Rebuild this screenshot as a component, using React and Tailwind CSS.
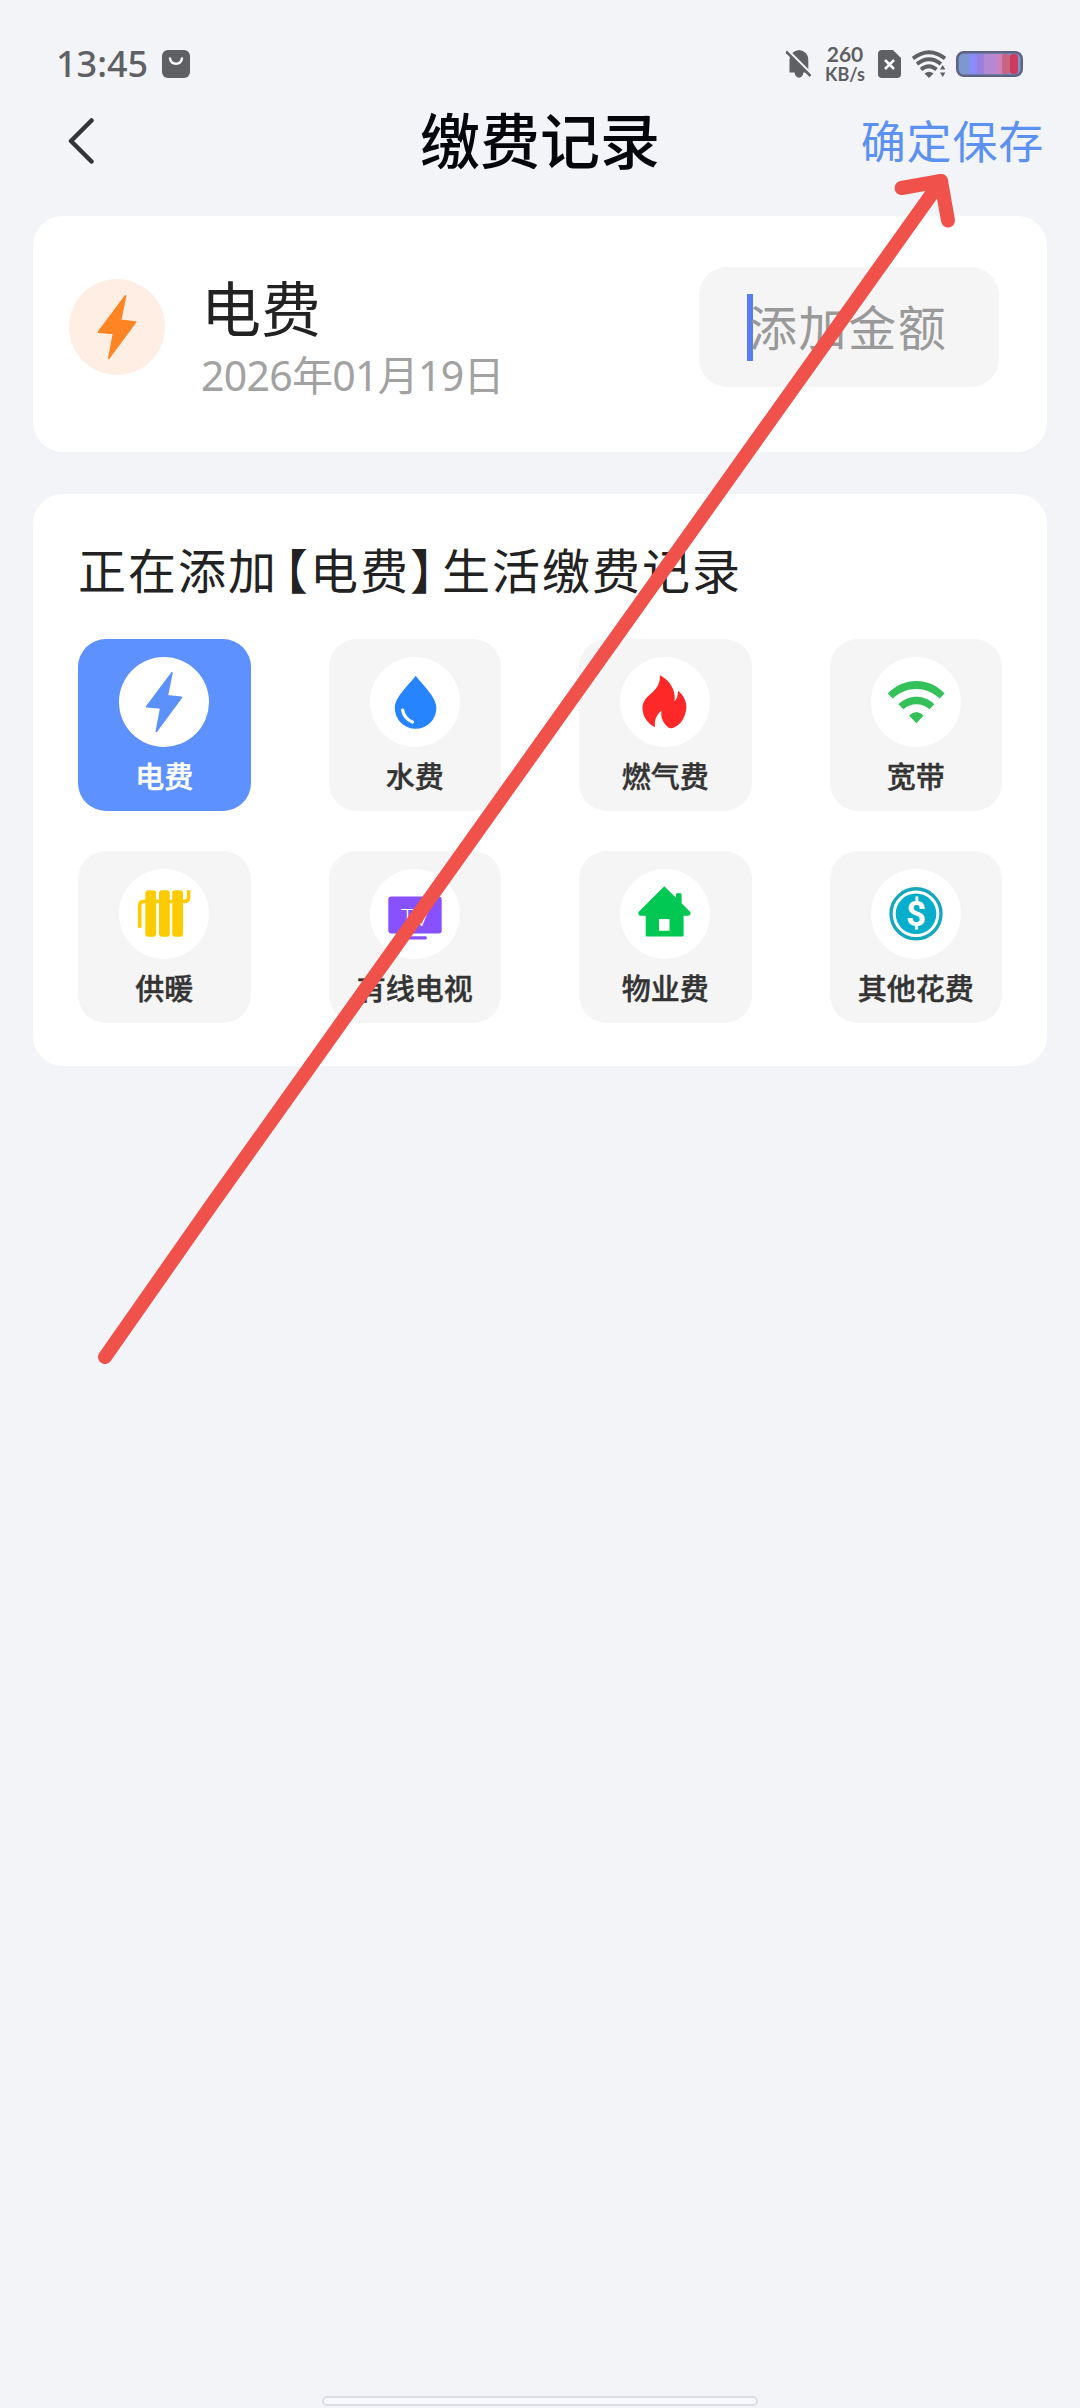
import React from 'react';

const Bolt = ({ className }) => (
  <svg viewBox="0 0 90 90" className={className} fill="currentColor" stroke="currentColor" strokeWidth="1.6" strokeLinejoin="round">
    <path d="M53 15.8 48.3 38.8 62.4 40.4 37.3 74.4 41.8 51 27.6 49.8Z" />
  </svg>
);

const Drop = () => (
  <svg viewBox="0 0 90 90" className="w-[90px] h-[90px]">
    <path d="M45.7 18.8C52.5 28 66.4 40 66.4 51a20.8 20.8 0 0 1-41.6 0C24.8 40 39 28 45.7 18.8Z" fill="#2684ff" />
    <path d="M32.6 53c1 5.5 4.5 10 9.9 12" fill="none" stroke="#fff" strokeWidth="3.2" strokeLinecap="round" />
  </svg>
);

const Flame = () => (
  <svg viewBox="0 0 90 90" className="w-[90px] h-[90px]" fill="#ff2828">
    <path d="M40 18.3C49 23 56 32 54.600 44.300C57.500 41.500 57.800 37.500 58 33.700C63.500 38 66.800 44.500 66.300 51C65.600 60.500 60.500 68.500 52 71.200Q50.300 71.500 48.600 70.800C43.300 66.500 40.300 60.500 41.500 53.500C36 58 34 64 35.200 70.300C27.500 66.500 22.700 59.500 22.500 51.500C22.500 36.500 40.500 37 40 18.300Z" />
  </svg>
);

const Wifi = () => (
  <svg viewBox="0 0 90 90" className="w-[90px] h-[90px]" fill="#34c15a">
    <path d="M16.8 36.4C33 20 58 20 73.6 36.4L68.6 41.6C55.5 28.8 35 28.8 21.8 41.6Z" />
    <path d="M27.4 47.3C37.5 37.2 53.5 37.2 63.4 47.3L58.5 52.3C51 45.7 39.8 45.7 32.4 52.3Z" />
    <path d="M38 58.5Q45.400 51.500 52.700 58.500L45.400 66.300Z" />
  </svg>
);

const Heater = () => (
  <svg viewBox="0 0 90 90" className="w-[90px] h-[90px]" fill="#fccb00">
    <path d="M20.7 58.7V36.5q0-4 4-4H65q4.6 0 4.6-4.5v-6.7" fill="none" stroke="#fccb00" strokeWidth="3.6" />
    <rect x="26.3" y="21.3" width="10.8" height="46.5" rx="3" />
    <rect x="40" y="21.3" width="10.8" height="46.5" rx="3" />
    <rect x="53.2" y="21.3" width="10.8" height="46.5" rx="3" />
  </svg>
);

const Television = () => (
  <svg viewBox="0 0 90 90" className="w-[90px] h-[90px]">
    <rect x="18.3" y="27.6" width="53.4" height="37" rx="3" fill="#8751ff" />
    <rect x="35.3" y="67.3" width="21.4" height="3.2" rx="1" fill="#8751ff" />
    <text x="45" y="56.5" textAnchor="middle" fontSize="23" fill="#fff" className="font-['Lato',sans-serif] font-light">TV</text>
  </svg>
);

const House = () => (
  <svg viewBox="0 0 90 90" className="w-[90px] h-[90px]">
    <path
      fillRule="evenodd"
      d="M44.3 17.2 56 28.7V25.2q0-1 1-1h3.6q1 0 1 1V34.3L70.3 43Q71.5 46.700 67.500 46.700H63.600V66.500q0 1-1 1H26.700q-1 0-1-1V46.700H21Q17.500 46.500 18.500 43ZM39 50V61.700H49.500V50Z"
      fill="#00c853"
    />
  </svg>
);

const Coin = () => (
  <svg viewBox="0 0 90 90" className="w-[90px] h-[90px]">
    <circle cx="45" cy="44.8" r="25" fill="none" stroke="#15a8bd" strokeWidth="3.4" />
    <circle cx="45" cy="44.8" r="20.3" fill="#06aecb" />
    <text x="45" y="57.3" textAnchor="middle" fontSize="35" fill="#fff" className="font-['Roboto',sans-serif] font-bold">$</text>
  </svg>
);

const categories = [
  { name: '电费', icon: <Bolt className="w-[90px] h-[90px] text-[#5c91fb]" />, active: true },
  { name: '水费', icon: <Drop /> },
  { name: '燃气费', icon: <Flame /> },
  { name: '宽带', icon: <Wifi /> },
  { name: '供暖', icon: <Heater /> },
  { name: '有线电视', icon: <Television /> },
  { name: '物业费', icon: <House /> },
  { name: '其他花费', icon: <Coin /> },
];

const StatusBar = () => (
  <div className="h-[100px] pt-[28px] pl-[56px] pr-[57px] flex items-center justify-between text-[#5f6063]">
    <div className="flex items-center">
      <span className="text-[36px] leading-none font-medium w-[106px] font-['Noto_Sans',sans-serif]">13:45</span>
      <svg viewBox="0 0 28 28" className="w-7 h-7">
        <rect width="28" height="28" rx="6" fill="currentColor" />
        <path d="M8 8.5c1.500 7 10.500 7 12 0" fill="none" stroke="#fff" strokeWidth="2.4" strokeLinecap="round" />
      </svg>
    </div>

    <div className="flex items-center">
      <svg viewBox="0 0 26 28" className="w-[26px] h-7 mr-[14px]">
        <path d="M3.5 22.500V9.500Q4.500 1 13 0 21.800 1 22.300 9.500V19l2 3.500H17.500Q16.500 27.500 13 27.800 9.500 27.500 8.500 22.500H1Z" fill="currentColor" />
        <path d="M1.5 0 26 24.5" stroke="#f2f4f8" strokeWidth="2.5" />
        <path d="M0 1.5 24.5 26" stroke="currentColor" strokeWidth="2.5" />
      </svg>
      <div className="flex flex-col items-center w-[38px] mr-[14px] font-bold font-['Lato',sans-serif]">
        <span className="text-[21px] leading-[20px]">260</span>
        <span className="text-[18px] leading-[20px]">KB/s</span>
      </div>
      <svg viewBox="0 0 23 28" className="w-[23px] h-7 mr-[11px]">
        <path d="M4 0H15L23 8V24q0 4-4 4H4q-4 0-4-4V4q0-4 4-4Z" fill="currentColor" />
        <path d="m7 10 9 9m0-9-9 9" stroke="#fff" strokeWidth="2.5" />
      </svg>
      <svg viewBox="0 0 34 28" className="w-[34px] h-7 mr-[10px]" fill="none" stroke="currentColor" strokeWidth="3.8">
        <path d="M1 8.5Q17-4 33 8.500" />
        <path d="M5 14Q17 4.500 29 14" />
        <path d="M9 19.5Q17 13 24.500 19.500" />
        <path d="M12.5 23.5Q17 20 21.500 23.500L17 28Z" fill="currentColor" stroke="none" />
        <path d="m28 19.5 2.7-4.5 2.7 4.5Zm0 3h5.4l-2.7 4.5Z" fill="currentColor" stroke="none" />
      </svg>
      <svg viewBox="0 0 67 26" className="w-[67px] h-[26px]">
        <rect x="1" y="1" width="65" height="24" rx="7" fill="#7e98cf" />
        <rect x="13" y="3" width="8" height="20" rx="2" fill="#8b8cfb" />
        <rect x="21" y="3" width="7" height="20" rx="2" fill="#9b80e0" />
        <rect x="28" y="3" width="12" height="20" fill="#b588d2" />
        <rect x="40" y="3" width="8" height="20" fill="#c884bd" />
        <rect x="46" y="3" width="8" height="20" rx="2" fill="#c96583" />
        <rect x="54" y="3" width="8" height="20" rx="3" fill="#cc3a5e" />
        <rect x="1.3" y="1.3" width="64.4" height="23.4" rx="6.5" fill="none" stroke="#5f6383" strokeWidth="2.6" />
      </svg>
    </div>
  </div>
);

const Header = () => (
  <div className="h-[116px] pl-[68px] pr-9 pb-[34px] grid grid-cols-[1fr_auto_1fr] items-center">
    <svg viewBox="0 0 26 46" className="w-[26px] h-[46px]" fill="none" stroke="#333437" strokeWidth="4.5" strokeLinecap="round" strokeLinejoin="round">
      <path d="M23.5 2.5 3 23 23.5 43.5" />
    </svg>
    <h1 className="text-[60px] leading-none font-medium text-[#05060c] -ml-8">缴费记录</h1>
    <button type="button" className="justify-self-end text-[45px] leading-none tracking-[0.8px] text-[#5c91f2]">
      确定保存
    </button>
  </div>
);

const SummaryCard = () => (
  <section className="h-[236px] rounded-[30px] bg-white pl-9 pr-12 flex items-start">
    <div className="mt-[63px] w-24 h-24 rounded-full bg-[#ffeee3] flex items-center justify-center">
      <Bolt className="w-24 h-24 text-[#ff8424]" />
    </div>
    <div className="ml-[36px] mt-[63px]">
      <div className="text-[60px] leading-[60px] text-[#222]">电费</div>
      <div className="mt-[12px] text-[41px] leading-[48px] tracking-[-0.7px] text-[#a2a2a2]">2026年01月19日</div>
    </div>
    <div className="ml-auto mt-[51px] w-[300px] h-[120px] rounded-[28px] bg-[#f5f5f5] pl-12 flex items-center">
      <span className="w-[6px] h-[67px] bg-[#587ff0]" />
      <span className="-ml-1 mt-[2px] text-[48px] leading-none tracking-[1.6px] text-[#999]">添加金额</span>
    </div>
  </section>
);

const CategoryTile = ({ name, icon, active }) => (
  <button
    type="button"
    className={
      'h-[172px] rounded-[28px] pt-[18px] flex flex-col items-center ' +
      (active ? 'bg-[#5c91ff] text-white' : 'bg-[#f5f5f5] text-[#333]')
    }
  >
    <span className="w-[90px] h-[90px] rounded-full bg-white">{icon}</span>
    <span className="mt-[15px] text-[29px] leading-[30px] font-medium [-webkit-text-stroke:0.4px_currentColor]">{name}</span>
  </button>
);

// hand-drawn pointer towards the save button
const Pointer = () => (
  <svg
    viewBox="0 0 1080 2408"
    className="absolute inset-0 w-[1080px] h-[2408px] pointer-events-none"
    fill="none"
    stroke="#f0524b"
    strokeWidth="14"
    strokeLinecap="round"
    strokeLinejoin="round"
  >
    <path d="M105 1357 210 1207 941 181" />
    <path d="M901.5 188 941 181 948 220.5" />
  </svg>
);

export default function App() {
  return (
    <div className="relative w-[1080px] h-[2408px] overflow-hidden bg-[#f2f4f8] flex flex-col font-['Noto_Sans','Noto_Sans_CJK_SC',sans-serif]">
      <StatusBar />
      <Header />

      <main className="px-[33px] flex flex-col gap-[42px]">
        <SummaryCard />

        <section className="h-[572px] rounded-[30px] bg-white px-[45px] pt-[50px]">
          <h2 className="text-[48px] leading-[54px] tracking-[2px] text-[#222] whitespace-nowrap">
            正在添加<span className="pl-[6px] [font-feature-settings:'halt']">【</span>电费
            <span className="pr-[6px] [font-feature-settings:'halt']">】</span>生活缴费记录
          </h2>
          <div className="mt-[41px] grid grid-cols-4 gap-x-[78px] gap-y-[40px]">
            {categories.map((item) => (
              <CategoryTile key={item.name} {...item} />
            ))}
          </div>
        </section>
      </main>

      <div className="mt-auto mb-[2px] self-center w-[436px] h-[10px] rounded-full bg-[#f6f8fc] border-2 border-[#dcdee3]" />
      <Pointer />
    </div>
  );
}
